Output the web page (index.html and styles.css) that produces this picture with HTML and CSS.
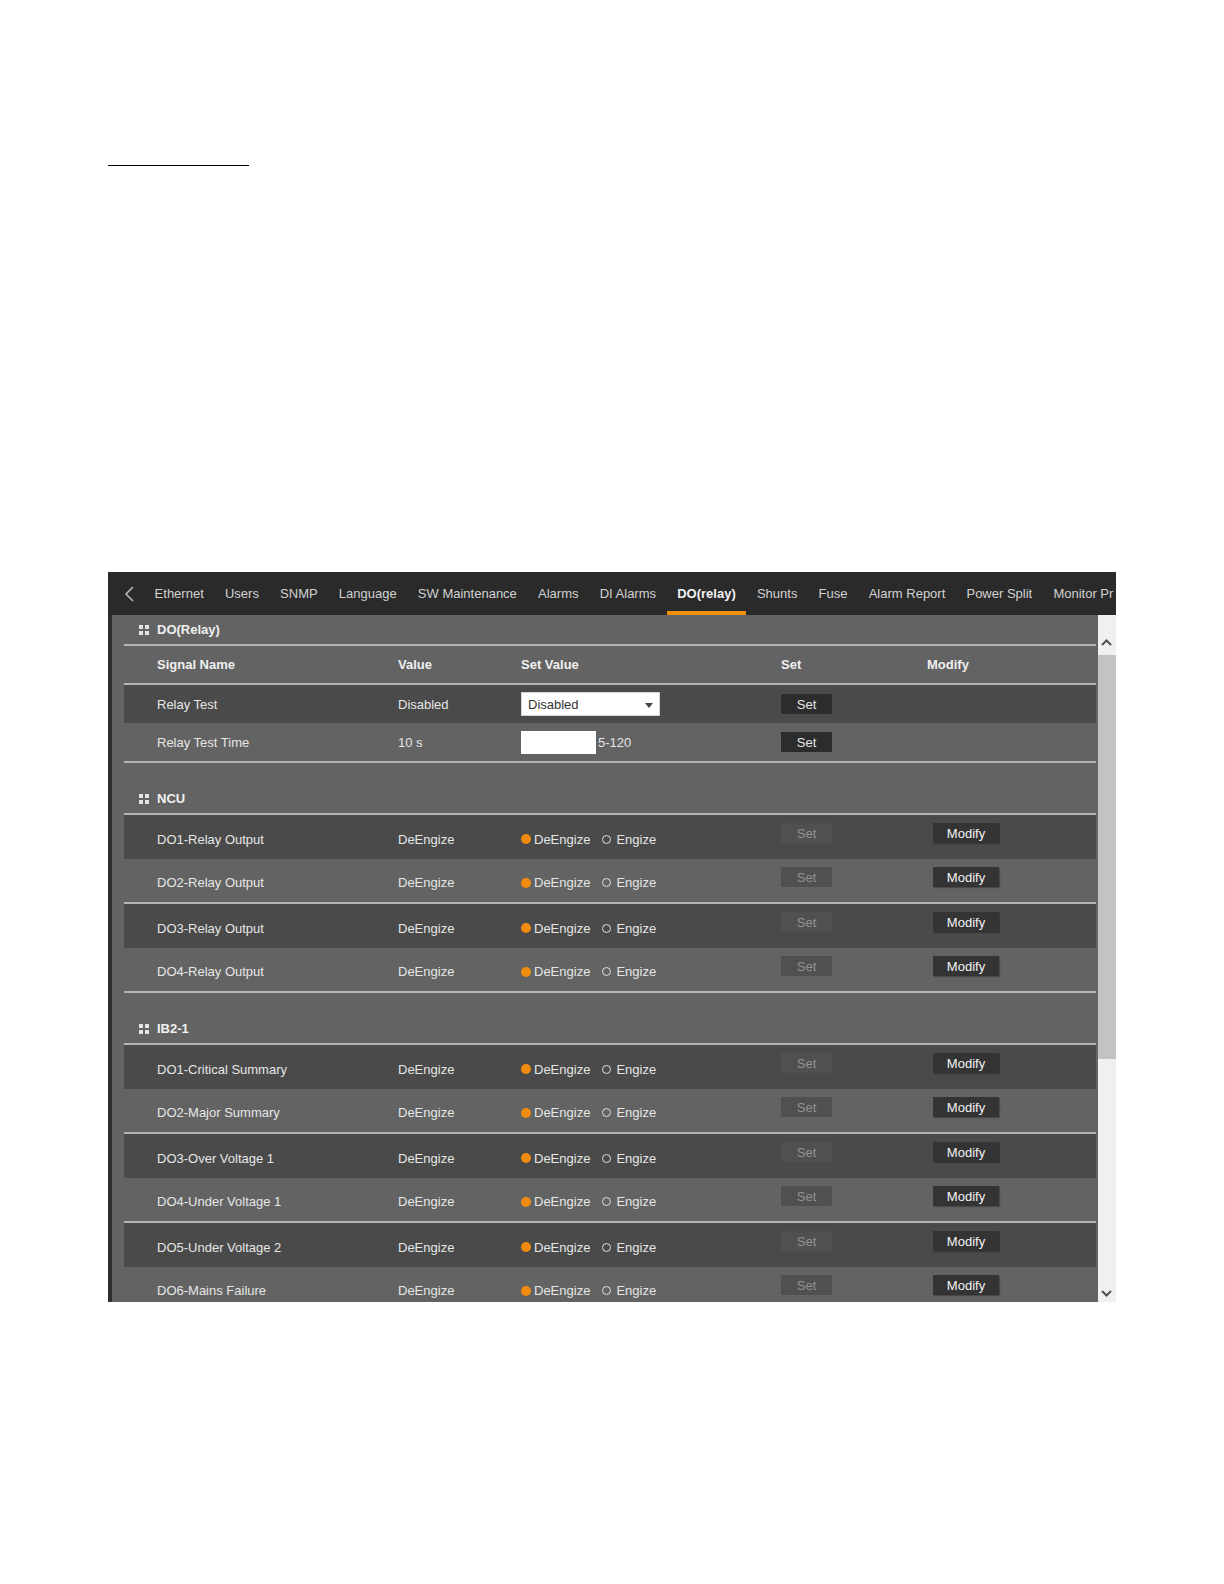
FILE: index.html
```html
<!DOCTYPE html>
<html lang="en">
<head>
  <meta charset="UTF-8">
  <title>DO(relay)</title>
  <link rel="stylesheet" href="styles.css">
</head>
<body>
  <div class="doc">
    <div class="blank-line"></div>

    <div class="frame">
      <div class="tabs">
        <span class="back">
          <svg width="10" height="16" viewBox="0 0 10 16"><polyline points="9,1 2,8 9,15" fill="none" stroke="#bdbdbd" stroke-width="1.5"/></svg>
        </span>
        <span class="tab">Ethernet</span>
        <span class="tab">Users</span>
        <span class="tab">SNMP</span>
        <span class="tab">Language</span>
        <span class="tab">SW Maintenance</span>
        <span class="tab">Alarms</span>
        <span class="tab">DI Alarms</span>
        <span class="tab active">DO(relay)</span>
        <span class="tab">Shunts</span>
        <span class="tab">Fuse</span>
        <span class="tab">Alarm Report</span>
        <span class="tab">Power Split</span>
        <span class="tab">Monitor Pr</span>
      </div>

      <div class="main">
        <div class="edge"></div>

        <div class="panel">
          <div class="section">
            <div class="sec-head"><i class="grip"></i>DO(Relay)</div>
            <div class="row thead">
              <span>Signal Name</span>
              <span>Value</span>
              <span>Set Value</span>
              <span>Set</span>
              <span>Modify</span>
            </div>
            <div class="row plain dark">
              <span>Relay Test</span>
              <span>Disabled</span>
              <span><span class="select">Disabled<i class="caret"></i></span></span>
              <span><button class="btn set">Set</button></span>
              <span></span>
            </div>
            <div class="row plain light">
              <span>Relay Test Time</span>
              <span>10 s</span>
              <span class="inline"><span class="input"></span>5-120</span>
              <span><button class="btn set">Set</button></span>
              <span></span>
            </div>
          </div>

          <div class="section">
            <div class="sec-head"><i class="grip"></i>NCU</div>
            <div class="row opt dark">
              <span>DO1-Relay Output</span>
              <span>DeEngize</span>
              <span class="radios"><span class="radio on"></span>DeEngize<span class="radio"></span>Engize</span>
              <span class="cell-btn"><button class="btn off">Set</button></span>
              <span class="cell-btn"><button class="btn modify">Modify</button></span>
            </div>
            <div class="row opt light">
              <span>DO2-Relay Output</span>
              <span>DeEngize</span>
              <span class="radios"><span class="radio on"></span>DeEngize<span class="radio"></span>Engize</span>
              <span class="cell-btn"><button class="btn off">Set</button></span>
              <span class="cell-btn"><button class="btn modify">Modify</button></span>
            </div>
            <div class="row opt dark">
              <span>DO3-Relay Output</span>
              <span>DeEngize</span>
              <span class="radios"><span class="radio on"></span>DeEngize<span class="radio"></span>Engize</span>
              <span class="cell-btn"><button class="btn off">Set</button></span>
              <span class="cell-btn"><button class="btn modify">Modify</button></span>
            </div>
            <div class="row opt light">
              <span>DO4-Relay Output</span>
              <span>DeEngize</span>
              <span class="radios"><span class="radio on"></span>DeEngize<span class="radio"></span>Engize</span>
              <span class="cell-btn"><button class="btn off">Set</button></span>
              <span class="cell-btn"><button class="btn modify">Modify</button></span>
            </div>
          </div>

          <div class="section">
            <div class="sec-head"><i class="grip"></i>IB2-1</div>
            <div class="row opt dark">
              <span>DO1-Critical Summary</span>
              <span>DeEngize</span>
              <span class="radios"><span class="radio on"></span>DeEngize<span class="radio"></span>Engize</span>
              <span class="cell-btn"><button class="btn off">Set</button></span>
              <span class="cell-btn"><button class="btn modify">Modify</button></span>
            </div>
            <div class="row opt light">
              <span>DO2-Major Summary</span>
              <span>DeEngize</span>
              <span class="radios"><span class="radio on"></span>DeEngize<span class="radio"></span>Engize</span>
              <span class="cell-btn"><button class="btn off">Set</button></span>
              <span class="cell-btn"><button class="btn modify">Modify</button></span>
            </div>
            <div class="row opt dark">
              <span>DO3-Over Voltage 1</span>
              <span>DeEngize</span>
              <span class="radios"><span class="radio on"></span>DeEngize<span class="radio"></span>Engize</span>
              <span class="cell-btn"><button class="btn off">Set</button></span>
              <span class="cell-btn"><button class="btn modify">Modify</button></span>
            </div>
            <div class="row opt light">
              <span>DO4-Under Voltage 1</span>
              <span>DeEngize</span>
              <span class="radios"><span class="radio on"></span>DeEngize<span class="radio"></span>Engize</span>
              <span class="cell-btn"><button class="btn off">Set</button></span>
              <span class="cell-btn"><button class="btn modify">Modify</button></span>
            </div>
            <div class="row opt dark">
              <span>DO5-Under Voltage 2</span>
              <span>DeEngize</span>
              <span class="radios"><span class="radio on"></span>DeEngize<span class="radio"></span>Engize</span>
              <span class="cell-btn"><button class="btn off">Set</button></span>
              <span class="cell-btn"><button class="btn modify">Modify</button></span>
            </div>
            <div class="row opt light">
              <span>DO6-Mains Failure</span>
              <span>DeEngize</span>
              <span class="radios"><span class="radio on"></span>DeEngize<span class="radio"></span>Engize</span>
              <span class="cell-btn"><button class="btn off">Set</button></span>
              <span class="cell-btn"><button class="btn modify">Modify</button></span>
            </div>
          </div>
        </div>

        <div class="scroll">
          <div class="arrow up">
            <svg width="11" height="7" viewBox="0 0 11 7"><polyline points="1,6 5.5,1.5 10,6" fill="none" stroke="#505050" stroke-width="2"/></svg>
          </div>
          <div class="thumb"></div>
          <div class="track"></div>
          <div class="arrow down">
            <svg width="11" height="7" viewBox="0 0 11 7"><polyline points="1,1 5.5,5.5 10,1" fill="none" stroke="#505050" stroke-width="2"/></svg>
          </div>
        </div>
      </div>
    </div>
  </div>
</body>
</html>
```

FILE: styles.css
```css
* {
  margin: 0;
  padding: 0;
  box-sizing: border-box;
}
body {
  background: #fff;
  font-family: "Liberation Sans", Arial, sans-serif;
  font-size: 13px;
}
.doc {
  padding: 165px 0 0 108px;
}
.blank-line {
  width: 141px;
  border-top: 1px solid #000;
}
.frame {
  margin: 406px 0 0 0;
  width: 1008px;
  height: 730px;
  overflow: hidden;
  display: flex;
  flex-direction: column;
  background: #636363;
  color: #e6e6e6;
}

/* tabs */
.tabs {
  flex: none;
  height: 43px;
  background: #2a2a2a;
  display: flex;
  white-space: nowrap;
  overflow: hidden;
  padding-left: 16px;
}
.back {
  display: flex;
  align-items: center;
  margin-right: 10px;
}
.tab {
  display: flex;
  align-items: center;
  padding: 0 10.6px;
  color: #d2d2d2;
}
.tab.active {
  font-weight: bold;
  color: #f2f2f2;
  box-shadow: inset 0 -4px 0 #f0900f;
}

/* body */
.main {
  flex: 1;
  min-height: 0;
  display: flex;
}
.edge {
  width: 4px;
  background: #2e2e2e;
}
.panel {
  flex: 1;
  padding: 0 2px 0 12px;
  overflow: hidden;
}
.section + .section {
  margin-top: 21px;
}
.sec-head {
  height: 31px;
  padding-left: 15px;
  border-bottom: 2px solid #b4b4b4;
  display: flex;
  align-items: center;
  gap: 8px;
  font-weight: bold;
  color: #f0f0f0;
}
.grip {
  width: 10px;
  height: 10px;
  background:
    linear-gradient(#e4e4e4, #e4e4e4) 0 0 / 4px 4px no-repeat,
    linear-gradient(#e4e4e4, #e4e4e4) 100% 0 / 4px 4px no-repeat,
    linear-gradient(#e4e4e4, #e4e4e4) 0 100% / 4px 4px no-repeat,
    linear-gradient(#e4e4e4, #e4e4e4) 100% 100% / 4px 4px no-repeat;
}

.row {
  display: grid;
  grid-template-columns: 241px 123px 260px 146px 1fr;
  align-items: center;
  padding-left: 33px;
}
.thead {
  height: 39px;
  border-bottom: 2px solid #b4b4b4;
  font-weight: bold;
  color: #f0f0f0;
}
.plain {
  height: 38px;
}
.plain.light {
  height: 40px;
  border-bottom: 2px solid #b4b4b4;
}
.opt {
  height: 44px;
  padding-top: 4px;
}
.opt.light {
  height: 45px;
  border-bottom: 2px solid #b4b4b4;
}
.dark {
  background: #4a4a4a;
}
.cell-btn {
  align-self: start;
  margin-top: 4px;
}

/* controls */
.btn {
  font: inherit;
  border: 0;
  height: 20px;
  width: 51px;
  background: #2c2c2c;
  color: #e6e6e6;
}
.btn.off {
  background: #505050;
  color: #939393;
}
.btn.modify {
  width: 66px;
  margin-left: 6px;
  background: #343434;
  color: #f2f2f2;
  box-shadow: 1px 1px 1px rgba(0, 0, 0, 0.25);
}
.select {
  width: 139px;
  height: 24px;
  background: #fff;
  color: #333;
  border: 1px solid #d6d6d6;
  padding-left: 6px;
  display: flex;
  align-items: center;
  position: relative;
}
.caret {
  position: absolute;
  right: 6px;
  top: 10px;
  border-left: 4px solid transparent;
  border-right: 4px solid transparent;
  border-top: 5px solid #444;
}
.inline {
  display: flex;
  align-items: center;
  gap: 2px;
}
.input {
  width: 75px;
  height: 23px;
  background: #fff;
}
.radios {
  display: flex;
  align-items: center;
}
.radio {
  width: 9px;
  height: 9px;
  border-radius: 50%;
  border: 1.5px solid #e0e0e0;
  margin: 0 5px 0 12px;
}
.radio.on {
  width: 10px;
  height: 10px;
  border: 0;
  background: #f28c0f;
  margin: 0 3px 0 0;
}

/* scrollbar */
.scroll {
  width: 18px;
  background: #f0f0f0;
  display: flex;
  flex-direction: column;
  padding-top: 20px;
}
.arrow {
  height: 14px;
  display: flex;
  align-items: center;
  padding-left: 3px;
}
.thumb {
  height: 404px;
  margin-top: 6px;
  background: #c3c3c3;
}
.track {
  flex: 1;
}
.arrow.down {
  margin-bottom: 2px;
}
```
